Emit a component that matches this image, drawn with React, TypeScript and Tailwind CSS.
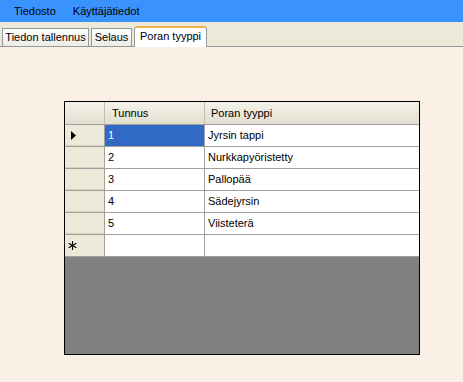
import React from 'react';

type Row = { id: string; name: string };

const rows: Row[] = [
  { id: '1', name: 'Jyrsin tappi' },
  { id: '2', name: 'Nurkkapyöristetty' },
  { id: '3', name: 'Pallopää' },
  { id: '4', name: 'Sädejyrsin' },
  { id: '5', name: 'Viisteterä' },
];

const tabs = [
  { label: 'Tiedon tallennus', w: 'w-[87px]' },
  { label: 'Selaus', w: 'w-[41px]' },
  { label: 'Poran tyyppi', w: 'w-[73px]' },
];

const App: React.FC = () => {
  return (
    <div
      className="flex h-[382px] w-[463px] flex-col overflow-hidden bg-[#faf0e6] text-[11px] text-black"
      style={{ fontFamily: '"Liberation Sans", Arial, sans-serif' }}
    >
      {/* Menu bar */}
      <div className="flex h-[22px] items-center gap-[17px] bg-[#3a92fd] pl-[14px]">
        <span>Tiedosto</span>
        <span>Käyttäjätiedot</span>
      </div>

      {/* Tab strip */}
      <div className="flex h-[25px] items-end gap-[2px] border-b border-[#919b9c] bg-[#ece9d8] pl-[2px]">
        {tabs.map((t, i) => {
          const active = i === tabs.length - 1;
          return active ? (
            <div
              key={t.label}
              className={`relative -mb-px flex h-[21px] items-center justify-center rounded-t-[3px] border-x border-t-2 border-[#919b9c] border-t-[#f5b24a] bg-white pb-[2px] ${t.w}`}
            >
              {t.label}
            </div>
          ) : (
            <div
              key={t.label}
              className={`flex h-[18px] items-center justify-center border-x border-t border-[#919b9c] bg-gradient-to-b from-white to-[#ecebe5] ${t.w}`}
            >
              {t.label}
            </div>
          );
        })}
      </div>

      {/* Data grid */}
      <div className="ml-[64px] mt-[54px] flex h-[254px] w-[356px] flex-col border border-black bg-[#808080]">
        <div className="flex h-[23px] border-b border-[#a0a0a0] bg-gradient-to-b from-[#f3f2ea] to-[#e2dfd0]">
          <div className="w-[40px] border-r border-[#c0bdae]" />
          <div className="flex w-[100px] items-center border-r border-[#c0bdae] pl-[7px]">Tunnus</div>
          <div className="flex flex-1 items-center pl-[6px]">Poran tyyppi</div>
        </div>

        {rows.map((r, i) => (
          <div key={r.id} className="flex h-[22px] border-b border-[#a0a0a0]">
            <div className="flex w-[40px] items-center border-r border-[#a0a0a0] bg-[#ece9d8] pl-[6px] shadow-[inset_0_-1px_0_#d6d2c2]">
              {i === 0 && (
                <svg width="5" height="9" viewBox="0 0 5 9">
                  <path d="M0 0 L5 4.5 L0 9 Z" fill="#000" />
                </svg>
              )}
            </div>
            <div
              className={`flex w-[100px] items-center border-r border-[#a0a0a0] pl-[3px] ${
                i === 0 ? 'bg-[#316ac5] text-white' : 'bg-white'
              }`}
            >
              {r.id}
            </div>
            <div className="flex flex-1 items-center bg-white pl-[3px]">{r.name}</div>
          </div>
        ))}

        <div className="flex h-[22px] border-b border-[#a0a0a0]">
          <div className="flex w-[40px] items-center border-r border-[#a0a0a0] bg-[#ece9d8] pl-[3px]">
            <svg width="9" height="9" viewBox="0 0 9 9" stroke="#000" strokeWidth="1.1">
              <path d="M4.5 0 V9 M0.6 2.25 L8.4 6.75 M0.6 6.75 L8.4 2.25" />
            </svg>
          </div>
          <div className="w-[100px] border-r border-[#a0a0a0] bg-white" />
          <div className="flex-1 bg-white" />
        </div>
      </div>
    </div>
  );
};

export default App;
